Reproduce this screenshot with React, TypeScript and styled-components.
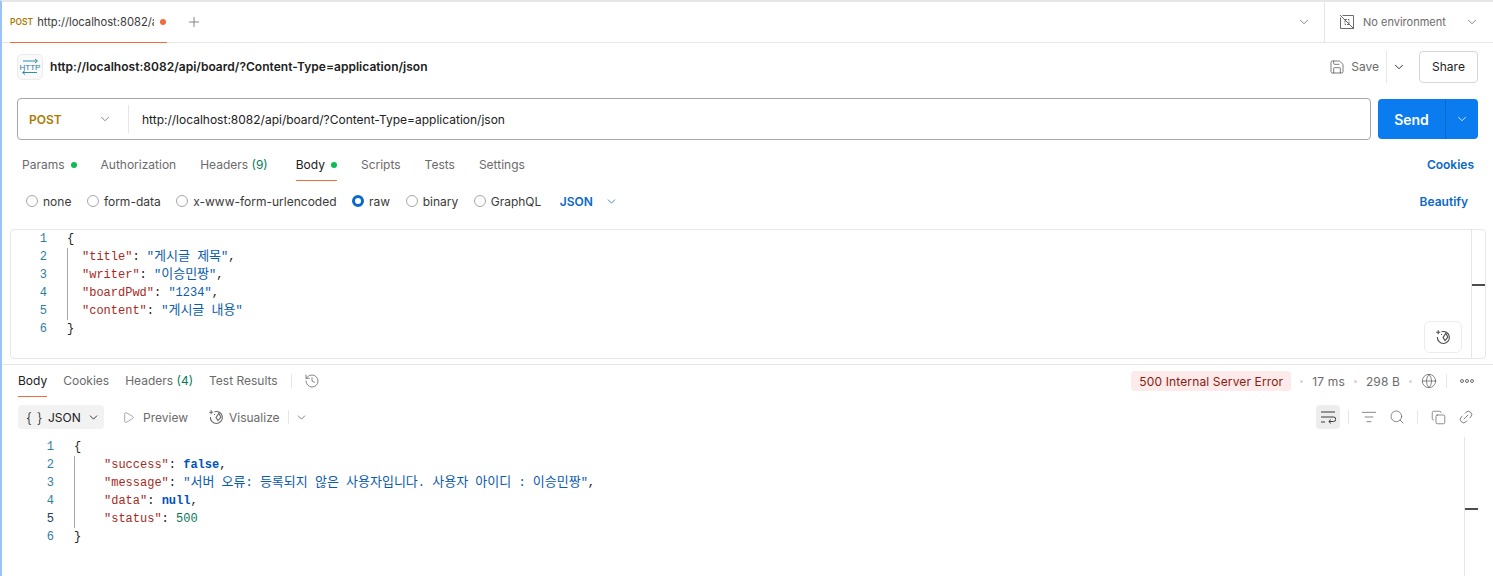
import React from "react";
import styled, { createGlobalStyle } from "styled-components";
import { ChevronDown, Plus, Save, History, Search, Copy, Link2, Globe, Play, ListFilter } from "lucide-react";

const Global = createGlobalStyle`
  html, body { margin: 0; padding: 0; background: #fff; overflow: hidden; }
  body { font-family: Inter, "Noto Sans CJK KR", sans-serif; color: #212121; }
  * { box-sizing: border-box; }
`;
const MONO = `"Liberation Mono", "Noto Sans CJK KR", monospace`;

const Page = styled.div`
  width: 1493px; height: 576px; overflow: hidden;
  border-left: 2px solid #9cc2f5; border-top: 2px solid #e6e6e6;
  display: flex; flex-direction: column; background: #fff;
`;
const TabBar = styled.div`
  height: 41px; flex: none; display: flex; align-items: stretch; padding-left: 8px;
  border-bottom: 1px solid #e6e6e6;
`;
const Tab = styled.div`
  width: 157px; height: 41px; display: flex; align-items: center; gap: 4px;
  border-bottom: 1px solid #f26b3a; white-space: nowrap;
`;
const TabMethod = styled.span`font-size: 8.5px; font-weight: 600; color: #ad7a03; line-height: 1;`;
const TabUrl = styled.span`font-size: 11.2px; color: #3a3a3a; width: 117px; overflow: hidden; margin-right: 2px;`;
const Dot = styled.span<{ $c: string; $s?: number }>`
  display: inline-block; flex: none; width: ${p => p.$s ?? 6}px; height: ${p => p.$s ?? 6}px;
  border-radius: 50%; background: ${p => p.$c};
`;
const AddTab = styled.div`width: 40px; margin-left: 7px; display: flex; align-items: center; justify-content: center; color: #6b6b6b; margin-bottom: 1px;`;
const Spacer = styled.div`flex: 1;`;
const EnvChevron = styled.div`width: 27px; display: flex; align-items: center; color: #6b6b6b;`;
const EnvBox = styled.div`
  width: 169px; display: flex; align-items: center; border-left: 1px solid #e6e6e6; padding-left: 14px; gap: 8px;
  color: #6b6b6b; font-size: 11px;
`;
const EnvLabel = styled.span`width: 94px; flex: none;`;
const TitleRow = styled.div`
  height: 47px; flex: none; display: flex; align-items: center; padding: 0 15px 0 15px;
`;
const HttpBadge = styled.div`
  width: 26px; height: 26px; border: 1px solid #ececec; border-radius: 5px; background: #f9f9f9;
  display: flex; align-items: center; justify-content: center; margin-right: 7px;
`;
const Title = styled.div`font-size: 12px; font-weight: 600; color: #212121; letter-spacing: 0.03px;`;
const SaveBox = styled.div`display: flex; align-items: center; gap: 6px; color: #6b6b6b; font-size: 12px; height: 32px; svg { color: #4d4d4d; }`;
const SaveMore = styled.div`
  display: flex; align-items: center; height: 32px; border-left: 1px solid #e6e6e6; margin-left: 7px; padding-left: 5px; margin-right: 2px; color: #212121; width: 31px;
`;
const ShareBtn = styled.div`
  width: 59px; height: 32px; border: 1px solid #d6d6d6; border-radius: 4px; font-size: 12px; color: #212121;
  display: flex; align-items: center; justify-content: center;
`;
const UrlRow = styled.div`display: flex; gap: 7px; padding: 8px 15px 0; height: 50px; flex: none;`;
const UrlBox = styled.div`
  width: 1354px; height: 42px; border: 1px solid #a6a6a6; border-radius: 4px; display: flex; align-items: center;
`;
const MethodPick = styled.div`
  width: 111px; height: 28px; border-right: 1px solid #e6e6e6; display: flex; align-items: center; justify-content: space-between;
  padding: 0 16px 0 11px; color: #ad7a03; font-weight: 600; font-size: 12px;
  svg { color: #6b6b6b; }
`;
const UrlText = styled.div`font-size: 12px; color: #212121; padding-left: 13px;`;
const SendBtn = styled.div`
  width: 100px; height: 40px; margin-top: 1px; background: #0a7cf0; border-radius: 4px; color: #fff; display: flex; align-items: stretch;
`;
const SendLabel = styled.div`
  width: 67px; display: flex; align-items: center; justify-content: center; font-size: 14px; font-weight: 600;
`;
const SendMore = styled.div`
  flex: 1; border-left: 1px solid #0a68c9; display: flex; align-items: center; justify-content: center;
`;
const ReqTabs = styled.div`
  display: flex; height: 40px; flex: none; padding: 0 19px 0 20px; align-items: flex-start; gap: 24px;
`;
const TabItem = styled.div<{ $active?: boolean; $extra?: number }>`
  display: flex; align-items: center; gap: 6px; font-size: 12px; height: 33px; margin-top: 8px; padding-top: 1px; white-space: nowrap;
  margin-right: ${p => p.$extra ?? 0}px;
  color: ${p => (p.$active ? "#212121" : "#6b6b6b")};
  border-bottom: 1px solid ${p => (p.$active ? "#f26b3a" : "transparent")};
`;
const Count = styled.span`color: #067a5a;`;
const LinkLabel = styled.div`display: flex; align-items: center; font-size: 12px; font-weight: 600; color: #0a68c9;`;
const TabLink = styled(LinkLabel)`height: 33px; margin-top: 8px;`;
const BodyTypes = styled.div`
  height: 41px; flex: none; display: flex; align-items: center; padding: 1px 25px 0 24px; font-size: 12px; color: #3a3a3a;
`;
const RadioItem = styled.div`display: flex; align-items: center; gap: 5px; margin-right: 15.5px;`;
const Radio = styled.span<{ $on?: boolean }>`
  width: 12px; height: 12px; border-radius: 50%; flex: none; background: #fff;
  border: ${p => (p.$on ? "3.5px solid #0a68c9" : "1px solid #a6a6a6")};
`;
const Lang = styled.div`display: flex; align-items: center; gap: 12px; color: #0a68c9; font-weight: 600; margin-left: 3px; svg { color: #0a68c9; }`;
const Editor = styled.div`
  position: relative; flex: none; margin: 8px 7px 0 8px; height: 130px; border: 1px solid #e6e6e6; border-radius: 4px;
  display: flex;
`;
const CodeArea = styled.div<{ $gutter: number; $top: number }>`
  flex: 1; display: grid; grid-template-columns: ${p => p.$gutter}px 1fr; align-content: start;
  font-family: ${MONO}; font-size: 12px; line-height: 18px; padding-top: ${p => p.$top}px;
`;
const Gutter = styled.div<{ $pad: number }>`
  text-align: right; padding-right: ${p => p.$pad}px; color: #2f7ea0;
`;
const GutterLine = styled.div<{ $active?: boolean }>`color: ${p => (p.$active ? "#1f3a5f" : "inherit")};`;
const Code = styled.div`color: #212121; white-space: pre;`;
const Indent = styled.div<{ $pad: number }>`border-left: 1px solid #a6a6a6; padding-left: ${p => p.$pad}px;`;
const Key = styled.span`color: #a82a1e;`;
const Str = styled.span`color: #0b5cad;`;
const Kr = styled.span`font-size: 13px; line-height: 0; font-family: "Noto Sans CJK KR", sans-serif;`;
const Kw = styled.span`color: #0053b8; font-weight: 600;`;
const Num = styled.span`color: #067a5a;`;
const ScrollTrack = styled.div`width: 14px; flex: none; border-left: 1px solid #e6e6e6; position: relative;`;
const ScrollMark = styled.div<{ $top: number }>`
  position: absolute; left: 0; right: 0; top: ${p => p.$top}px; height: 2px; background: #4d4d4d;
`;
const Floating = styled.div`
  position: absolute; right: 23px; bottom: 5px; width: 38px; height: 32px; background: #fff; border: 1px solid #ececec; border-radius: 6px;
  display: flex; align-items: center; justify-content: center; color: #4d4d4d;
`;
const Divider = styled.div`height: 1px; flex: none; margin-top: 5px; background: #e6e6e6;`;
const RespTabs = styled.div`
  height: 32px; flex: none; display: flex; align-items: stretch; padding: 0 19px 0 16px; font-size: 12px;
`;
const RespTab = styled.div<{ $active?: boolean; $gap?: number }>`
  display: flex; align-items: center; margin-right: ${p => p.$gap ?? 16}px; white-space: nowrap;
  color: ${p => (p.$active ? "#212121" : "#6b6b6b")};
  border-bottom: 1px solid ${p => (p.$active ? "#f26b3a" : "transparent")};
`;
const VRule = styled.span<{ $h?: number; $m?: string }>`
  width: 1px; height: ${p => p.$h ?? 14}px; background: #e6e6e6; flex: none; align-self: center; margin: ${p => p.$m ?? "0"};
`;
const IconSlot = styled.div<{ $left?: number }>`display: flex; align-items: center; color: #5c5c5c; margin-left: ${p => p.$left ?? 0}px;`;
const StatusGroup = styled.div`display: flex; align-items: center; gap: 9px; color: #6b6b6b; font-size: 12px; letter-spacing: 0.14px;`;
const ErrorPill = styled.div`
  height: 20px; padding: 0 8px; border-radius: 4px; background: #fdeaea; color: #8e1a10; display: flex; align-items: center; font-size: 12px;
`;
const RespTools = styled.div`
  height: 40px; flex: none; display: flex; align-items: center; padding: 0 19px 0 16px; font-size: 12px; color: #6b6b6b;
`;
const JsonPick = styled.div`
  width: 86px; height: 24px; border-radius: 4px; background: #f2f2f2; color: #212121; display: flex; align-items: center; padding-left: 8px; gap: 6px; margin-right: 18px;
`;
const Braces = styled.span`width: 16px; font-size: 14px; letter-spacing: 0.5px; white-space: pre; font-family: Inter, sans-serif; font-weight: 300;`;
const ToolText = styled.div<{ $gap: number; $right: number }>`display: flex; align-items: center; gap: ${p => p.$gap}px; margin-right: ${p => p.$right}px;`;
const WrapBtn = styled.div`
  width: 24px; height: 24px; border-radius: 4px; background: #ededed; color: #3a3a3a; display: flex; align-items: center; justify-content: center;
`;
const RespBody = styled.div`flex: 1; display: flex; padding: 0 15px 0 0; min-height: 0;`;
const Rotated = styled.span`display: flex; transform: rotate(-45deg);`;

const kr = (text: string) =>
  text.split(/([가-힣]+)/).map((part, i) => (/[가-힣]/.test(part) ? <Kr key={i}>{part}</Kr> : part));

const VisualizeIcon = ({ s = 16 }: { s?: number }) => (
  <svg width={s} height={s} viewBox="0 0 16 16" fill="none" stroke="currentColor" strokeWidth="1.1">
    <path d="M6.5 2.8A6 6 0 1 1 2.4 8" />
    <path d="M10.8 4.2 8 8.6l2 3 2.9-3.4z" />
    <path d="M3.2 1.2v4M1.2 3.2h4" />
    <path d="M6 5.500h1" />
  </svg>
);
const HttpIcon = () => (
  <svg width="24" height="24" viewBox="0 0 24 24" fill="none">
    <path d="M5 6h14M17 4l2.500 2L17 8" stroke="#2f8fa8" strokeWidth="1" />
    <text x="12" y="15" textAnchor="middle" fontFamily="Liberation Sans Narrow, Liberation Sans" fontSize="8" fill="#1f7f9c">HTTP</text>
    <path d="M19 17.500H5M7 15.500l-2.500 2 2.500 2" stroke="#2f8fa8" strokeWidth="1" />
  </svg>
);
const NoEnvIcon = () => (
  <svg width="16" height="16" viewBox="0 0 16 16" fill="none" stroke="#6b6b6b" strokeWidth="1">
    <path d="M1.500 3.500V14.500H14.500V1.500H3.500" />
    <path d="M1 1l14 14" />
    <path d="M6 5.500h4v5H6z" strokeDasharray="2 1" />
  </svg>
);
const WrapIcon = () => (
  <svg width="16" height="16" viewBox="0 0 16 16" fill="none" stroke="currentColor" strokeWidth="1">
    <path d="M1 3h14M1 8h12.500a1.800 1.800 0 0 1 0 4.500H9M1 13h4" />
    <path d="M10.800 10.600 8.800 12.500l2 1.900" />
  </svg>
);
const MoreDots = () => (
  <svg width="14" height="6" viewBox="0 0 14 6" fill="none" stroke="#6b6b6b" strokeWidth="1">
    <circle cx="2" cy="3" r="1.500" /><circle cx="7" cy="3" r="1.500" /><circle cx="12" cy="3" r="1.500" />
  </svg>
);

export default function App() {
  return (
    <>
      <Global />
      <Page>
        <TabBar>
          <Tab>
            <TabMethod>POST</TabMethod>
            <TabUrl>http://localhost:8082/api/board/?Content-Type</TabUrl>
            <Dot $c="#f26b3a" />
          </Tab>
          <AddTab><Plus size={16} strokeWidth={1.2} /></AddTab>
          <Spacer />
          <EnvChevron><ChevronDown size={14} strokeWidth={1.4} /></EnvChevron>
          <EnvBox>
            <NoEnvIcon />
            <EnvLabel>No environment</EnvLabel>
            <ChevronDown size={14} strokeWidth={1.4} />
          </EnvBox>
        </TabBar>
        <TitleRow>
          <HttpBadge><HttpIcon /></HttpBadge>
          <Title>http://localhost:8082/api/board/?Content-Type=application/json</Title>
          <Spacer />
          <SaveBox><Save size={16} strokeWidth={1.1} />Save</SaveBox>
          <SaveMore><ChevronDown size={14} strokeWidth={1.6} /></SaveMore>
          <ShareBtn>Share</ShareBtn>
        </TitleRow>
        <UrlRow>
          <UrlBox>
            <MethodPick>POST<ChevronDown size={14} strokeWidth={1.4} /></MethodPick>
            <UrlText>http://localhost:8082/api/board/?Content-Type=application/json</UrlText>
          </UrlBox>
          <SendBtn>
            <SendLabel>Send</SendLabel>
            <SendMore><ChevronDown size={14} strokeWidth={1.4} /></SendMore>
          </SendBtn>
        </UrlRow>
        <ReqTabs>
          <TabItem>Params <Dot $c="#0cbb52" /></TabItem>
          <TabItem>Authorization</TabItem>
          <TabItem $extra={4}><span>Headers <Count>(9)</Count></span></TabItem>
          <TabItem $active>Body <Dot $c="#0cbb52" /></TabItem>
          <TabItem>Scripts</TabItem>
          <TabItem>Tests</TabItem>
          <TabItem>Settings</TabItem>
          <Spacer />
          <TabLink>Cookies</TabLink>
        </ReqTabs>
        <BodyTypes>
          <RadioItem><Radio />none</RadioItem>
          <RadioItem><Radio />form-data</RadioItem>
          <RadioItem><Radio />x-www-form-urlencoded</RadioItem>
          <RadioItem><Radio $on />raw</RadioItem>
          <RadioItem><Radio />binary</RadioItem>
          <RadioItem><Radio />GraphQL</RadioItem>
          <Lang>JSON<ChevronDown size={13} strokeWidth={1.4} /></Lang>
          <Spacer />
          <LinkLabel>Beautify</LinkLabel>
        </BodyTypes>
        <Editor>
          <CodeArea $gutter={56} $top={0}>
            <Gutter $pad={20}>
              {[1, 2, 3, 4, 5, 6].map(n => <GutterLine key={n}>{n}</GutterLine>)}
            </Gutter>
            <Code>
              <div>{"{"}</div>
              <Indent $pad={14}>
                <div><Key>"title"</Key>: <Str>{kr('"게시글 제목"')}</Str>,</div>
                <div><Key>"writer"</Key>: <Str>{kr('"이승민짱"')}</Str>,</div>
                <div><Key>"boardPwd"</Key>: <Str>"1234"</Str>,</div>
                <div><Key>"content"</Key>: <Str>{kr('"게시글 내용"')}</Str></div>
              </Indent>
              <div>{"}"}</div>
            </Code>
          </CodeArea>
          <ScrollTrack><ScrollMark $top={54} /></ScrollTrack>
          <Floating><VisualizeIcon /></Floating>
        </Editor>
        <Divider />
        <RespTabs>
          <RespTab $active>Body</RespTab>
          <RespTab>Cookies</RespTab>
          <RespTab><span>Headers <Count>(4)</Count></span></RespTab>
          <RespTab $gap={13}>Test Results</RespTab>
          <VRule $m="0 12px 0 0" />
          <IconSlot><History size={16} strokeWidth={1.1} /></IconSlot>
          <Spacer />
          <StatusGroup>
            <ErrorPill>500 Internal Server Error</ErrorPill>
            <Dot $c="#d6d6d6" $s={3} />
            <span>17 ms</span>
            <Dot $c="#d6d6d6" $s={3} />
            <span>298 B</span>
            <Dot $c="#d6d6d6" $s={3} />
            <IconSlot><Globe size={16} strokeWidth={1.1} /></IconSlot>
            <VRule $m="0 4px 0 0" />
            <IconSlot><MoreDots /></IconSlot>
          </StatusGroup>
        </RespTabs>
        <RespTools>
          <JsonPick><Braces>{"{ }"}</Braces>JSON<ChevronDown size={13} strokeWidth={1.6} /></JsonPick>
          <ToolText $gap={8} $right={20}><Play size={13} strokeWidth={1.1} />Preview</ToolText>
          <ToolText $gap={5} $right={8}><VisualizeIcon />Visualize</ToolText>
          <VRule $m="0 6px 0 0" />
          <IconSlot><ChevronDown size={13} strokeWidth={1.4} /></IconSlot>
          <Spacer />
          <WrapBtn><WrapIcon /></WrapBtn>
          <VRule $m="0 12px 0 8px" />
          <IconSlot><ListFilter size={16} strokeWidth={1.1} /></IconSlot>
          <IconSlot $left={12}><Search size={16} strokeWidth={1.1} /></IconSlot>
          <VRule $m="0 13px 0 12px" />
          <IconSlot><Copy size={15} strokeWidth={1.1} /></IconSlot>
          <IconSlot $left={12}><Rotated><Link2 size={16} strokeWidth={1.1} /></Rotated></IconSlot>
        </RespTools>
        <RespBody>
          <CodeArea $gutter={72} $top={1}>
            <Gutter $pad={20}>
              {[1, 2, 3, 4, 5, 6].map(n => <GutterLine key={n} $active={n === 5}>{n}</GutterLine>)}
            </Gutter>
            <Code>
              <div>{"{"}</div>
              <Indent $pad={29}>
                <div><Key>"success"</Key>: <Kw>false</Kw>,</div>
                <div><Key>"message"</Key>: <Str>{kr('"서버 오류: 등록되지 않은 사용자입니다. 사용자 아이디 : 이승민짱"')}</Str>,</div>
                <div><Key>"data"</Key>: <Kw>null</Kw>,</div>
                <div><Key>"status"</Key>: <Num>500</Num></div>
              </Indent>
              <div>{"}"}</div>
            </Code>
          </CodeArea>
          <ScrollTrack><ScrollMark $top={71} /></ScrollTrack>
        </RespBody>
      </Page>
    </>
  );
}
